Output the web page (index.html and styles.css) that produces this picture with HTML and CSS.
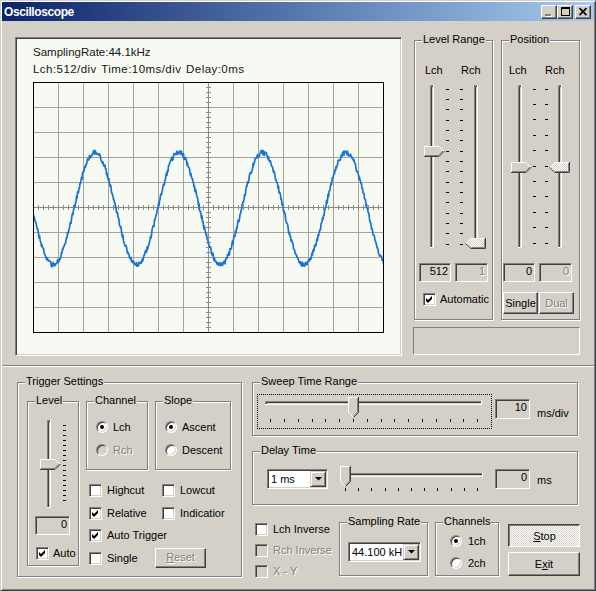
FILE: index.html
```html
<!DOCTYPE html>
<html>
<head>
<meta charset="utf-8">
<title>Oscilloscope</title>
<link rel="stylesheet" href="styles.css">
</head>
<body>
<div class="window">
  <div class="titlebar">
    <span class="title">Oscilloscope</span>
    <div class="tbtns">
      <span class="tbtn"><svg width="14" height="12" viewBox="0 0 14 12"><rect x="4" y="9" width="6" height="2" fill="#fff"/><rect x="3" y="8" width="6" height="2" fill="#808080"/></svg></span>
      <span class="tbtn"><svg width="14" height="12" viewBox="0 0 14 12"><path d="M3 1h9v9H3zM4 3v6h7V3z" fill="#000" fill-rule="evenodd"/></svg></span>
      <span class="tbtn close"><svg width="14" height="12" viewBox="0 0 14 12"><path d="M3.5 2.2l7 7M10.5 2.2l-7 7" stroke="#000" stroke-width="1.7" fill="none"/></svg></span>
    </div>
  </div>

  <div class="client">
    <div class="top">
      <div class="scope">
        <div class="scope-line">SamplingRate:44.1kHz</div>
        <div class="scope-line scope-l2">Lch:512/div Time:10ms/div Delay:0ms</div>
        <svg class="plot" width="351" height="251" viewBox="0 0 351 251">
          <path d="M25.5 0V251M50.5 0V251M75.5 0V251M100.5 0V251M125.5 0V251M150.5 0V251M200.5 0V251M225.5 0V251M250.5 0V251M275.5 0V251M300.5 0V251M325.5 0V251M0 25.5H351M0 50.5H351M0 75.5H351M0 100.5H351M0 150.5H351M0 175.5H351M0 200.5H351M0 225.5H351" stroke="#a3a3a0" fill="none"/>
          <path d="M175.5 0V251M0 125.5H351" stroke="#8a8a88" fill="none"/>
          <path d="M175.5 0V251M0 125.5H351" stroke="#8a8a88" stroke-width="5" stroke-dasharray="1 4" fill="none"/>
          <path class="wave" d="" fill="none" stroke="#1874d4" stroke-width="1.7" stroke-linejoin="round"/>
          <rect x="0.5" y="0.5" width="350" height="250" fill="none" stroke="#000"/>
        </svg>
      </div>

      <div class="rcol">
        <div class="rgroups">
          <div class="grp g-level">
            <span class="glabel">Level Range</span>
            <div class="chhead"><span class="c1 c1-lev">Lch</span><span>Rch</span></div>
            <svg class="vsl" width="77" height="166" viewBox="0 0 77 166">
              <g fill="none">
                <path d="M15.5 164V1.5H19" stroke="#808080"/>
                <path d="M16.5 163V2.5H18" stroke="#404040"/>
                <path d="M18.5 1V163.5H15" stroke="#fff"/>
                <path d="M59.5 164V1.5H63" stroke="#808080"/>
                <path d="M60.5 163V2.5H62" stroke="#404040"/>
                <path d="M62.5 1V163.5H59" stroke="#fff"/>
                <path d="M32.5 5V161M46.5 5V161" stroke="#000" stroke-width="3" stroke-dasharray="1 9 1 9 1 10"/>
              </g>
              <use href="#thR" x="9" y="62" width="21" height="11"/>
              <use href="#thL" x="50" y="154" width="21" height="11"/>
            </svg>
            <div class="edrow edrow-lev">
              <div class="edit w32">512</div>
              <div class="edit w33 dis-t">1</div>
            </div>
            <div class="ck autock">
              <span class="cb"><svg class="chk" width="9" height="9"><use href="#chk"/></svg></span>
              <span class="lbl4">Automatic</span>
            </div>
          </div>

          <div class="grp g-pos">
            <span class="glabel">Position</span>
            <div class="chhead"><span class="c1 c1-pos">Lch</span><span>Rch</span></div>
            <svg class="vsl" width="77" height="166" viewBox="0 0 77 166">
              <g fill="none">
                <path d="M16.5 164V1.5H20" stroke="#808080"/>
                <path d="M17.5 163V2.5H19" stroke="#404040"/>
                <path d="M19.5 1V163.5H16" stroke="#fff"/>
                <path d="M56.5 164V1.5H60" stroke="#808080"/>
                <path d="M57.5 163V2.5H59" stroke="#404040"/>
                <path d="M59.5 1V163.5H56" stroke="#fff"/>
                <path d="M32.5 5V161M44.5 5V161" stroke="#000" stroke-width="3" stroke-dasharray="1 14 1 14 1 15 1 14 1 15"/>
              </g>
              <use href="#thR" x="9" y="78" width="21" height="11"/>
              <use href="#thL" x="47" y="78" width="21" height="11"/>
            </svg>
            <div class="edrow edrow-pos">
              <div class="edit w32">0</div>
              <div class="edit w33 dis-t">0</div>
            </div>
            <div class="pbtns">
              <div class="btn pbtn">Single</div>
              <div class="btn pbtn dis-t">Dual</div>
            </div>
          </div>
        </div>
        <div class="status"></div>
      </div>
    </div>

    <div class="sep"></div>

    <div class="bottom">
      <div class="grp g-trig">
        <span class="glabel">Trigger Settings</span>
        <div class="trow">
          <div class="grp g-tlev">
            <span class="glabel">Level</span>
            <svg class="tlsl" width="50" height="98" viewBox="0 0 50 98">
              <g fill="none">
                <path d="M19.5 96V8.5H23" stroke="#808080"/>
                <path d="M20.5 95V9.5H22" stroke="#404040"/>
                <path d="M22.5 8V95.5H19" stroke="#fff"/>
                <path d="M36.5 13V89" stroke="#000" stroke-width="3" stroke-dasharray="1 4"/>
              </g>
              <use href="#thR" x="12" y="47" width="21" height="11"/>
            </svg>
            <div class="edit tledit">0</div>
            <div class="ck tlck">
              <span class="cb"><svg class="chk" width="9" height="9"><use href="#chk"/></svg></span>
              <span class="lbl4">Auto</span>
            </div>
          </div>

          <div class="tright">
            <div class="tgroups">
              <div class="grp g-chan">
                <span class="glabel">Channel</span>
                <div class="rrow r1"><span class="rd on"></span><span class="lbl5">Lch</span></div>
                <div class="rrow r2"><span class="rd dis"></span><span class="lbl5 dis-t">Rch</span></div>
              </div>
              <div class="grp g-slope">
                <span class="glabel">Slope</span>
                <div class="rrow r1"><span class="rd on"></span><span class="lbl5">Ascent</span></div>
                <div class="rrow r2"><span class="rd"></span><span class="lbl5">Descent</span></div>
              </div>
            </div>
            <div class="cbgrid">
              <div class="ck"><span class="cb"></span><span class="lbl5">Highcut</span></div>
              <div class="ck"><span class="cb"></span><span class="lbl5">Lowcut</span></div>
              <div class="ck"><span class="cb"><svg class="chk" width="9" height="9"><use href="#chk"/></svg></span><span class="lbl5">Relative</span></div>
              <div class="ck"><span class="cb"></span><span class="lbl5">Indicatior</span></div>
              <div class="ck span2"><span class="cb"><svg class="chk" width="9" height="9"><use href="#chk"/></svg></span><span class="lbl5">Auto Trigger</span></div>
              <div class="ck"><span class="cb"></span><span class="lbl5">Single</span></div>
              <div class="ck"><div class="btn reset dis-t"><u>R</u>eset</div></div>
            </div>
          </div>
        </div>
      </div>

      <div class="rb">
        <div class="grp g-sweep">
          <span class="glabel">Sweep Time Range</span>
          <div class="srow">
            <div class="focus">
              <svg class="hsl" width="233" height="33" viewBox="0 0 233 33">
                <g fill="none">
                  <path d="M7.5 10V6.5H224" stroke="#808080"/>
                  <path d="M8.5 9V7.5H223" stroke="#404040"/>
                  <path d="M7 9.5H223.5V6" stroke="#fff"/>
                  <path d="M12 25.5H220" stroke="#000" stroke-width="3" stroke-dasharray="1 13 1 13 1 13 1 12 1 13"/>
                </g>
                <use href="#thD" x="90" y="2" width="11" height="21"/>
              </svg>
            </div>
            <div class="edit sedit">10</div>
            <span class="unit sunit">ms/div</span>
          </div>
        </div>

        <div class="grp g-delay">
          <span class="glabel">Delay Time</span>
          <div class="drow">
            <div class="combo dcombo">
              <span class="ctext">1 ms</span>
              <span class="ddb"><svg width="7" height="4" viewBox="0 0 7 4"><polygon points="0,0 7,0 3.5,3.5" fill="#000"/></svg></span>
            </div>
            <svg class="dsl" width="150" height="31" viewBox="0 0 150 31">
              <g fill="none">
                <path d="M7.5 14V10.5H145" stroke="#808080"/>
                <path d="M8.5 13V11.5H144" stroke="#404040"/>
                <path d="M7 13.5H144.5V10" stroke="#fff"/>
                <path d="M7 26.5H140" stroke="#000" stroke-width="3" stroke-dasharray="1 12 1 12 1 13 1 12 1 12"/>
              </g>
              <use href="#thD" x="2" y="3" width="11" height="21"/>
            </svg>
            <div class="edit dedit">0</div>
            <span class="unit dunit">ms</span>
          </div>
        </div>

        <div class="brow">
          <div class="cbcol">
            <div class="ck"><span class="cb"></span><span class="lbl5">Lch Inverse</span></div>
            <div class="ck"><span class="cb dis"></span><span class="lbl5 dis-t">Rch Inverse</span></div>
            <div class="ck"><span class="cb dis"></span><span class="lbl5 dis-t">X - Y</span></div>
          </div>
          <div class="grp g-samp">
            <span class="glabel">Sampling Rate</span>
            <div class="combo scombo">
              <span class="ctext">44.100 kH</span>
              <span class="ddb"><svg width="7" height="4" viewBox="0 0 7 4"><polygon points="0,0 7,0 3.5,3.5" fill="#000"/></svg></span>
            </div>
          </div>
          <div class="grp g-chs">
            <span class="glabel">Channels</span>
            <div class="rrow c1r"><span class="rd on"></span><span class="lbl6">1ch</span></div>
            <div class="rrow c2r"><span class="rd"></span><span class="lbl6">2ch</span></div>
          </div>
          <div class="bcol">
            <div class="btn stop"><u>S</u>top</div>
            <div class="btn exit">E<u>x</u>it</div>
          </div>
        </div>
      </div>
    </div>
  </div>
</div>

<svg class="defs" width="0" height="0" aria-hidden="true">
  <defs>
    <pattern id="dith" width="2" height="2" patternUnits="userSpaceOnUse">
      <rect width="2" height="2" fill="#d4d0c8"/>
      <rect width="1" height="1" fill="#fff"/>
      <rect x="1" y="1" width="1" height="1" fill="#fff"/>
    </pattern>
    <symbol id="chk" viewBox="0 0 9 9">
      <polygon points="1,3 3,5 7,1 7,4 3,8 1,6" fill="#000"/>
    </symbol>
    <symbol id="thR" viewBox="0 0 21 11">
      <polygon points="0,0 15,0 20.5,5.5 15,11 0,11" fill="#d4d0c8"/>
      <polyline points="0.5,11 0.5,0.5 15,0.5 20,5.5" fill="none" stroke="#fff"/>
      <polyline points="0,10.5 15,10.5 20.5,5" fill="none" stroke="#404040"/>
      <polyline points="1,9.5 14.5,9.5 19,5" fill="none" stroke="#808080"/>
    </symbol>
    <symbol id="thL" viewBox="0 0 21 11">
      <polygon points="0.5,5.5 6,0 21,0 21,11 6,11" fill="url(#dith)"/>
      <polyline points="1,5.5 6,0.5 20,0.5" fill="none" stroke="#fff"/>
      <polyline points="0.5,5.5 6,10.5 20.5,10.5 20.5,0" fill="none" stroke="#404040"/>
      <polyline points="6.5,9.5 19.5,9.5 19.5,1" fill="none" stroke="#808080"/>
    </symbol>
    <symbol id="thD" viewBox="0 0 11 21">
      <polygon points="0,0 11,0 11,15 5.5,20.5 0,15" fill="#d4d0c8"/>
      <polyline points="5,20 0.5,15.5 0.5,0.5 10,0.5" fill="none" stroke="#fff"/>
      <polyline points="10.5,0 10.5,15.5 5.5,20.5" fill="none" stroke="#404040"/>
      <polyline points="9.5,1 9.5,15 5.5,19" fill="none" stroke="#808080"/>
    </symbol>
  </defs>
</svg>
<script src="script.js"></script>
</body>
</html>
```

FILE: styles.css
```css
* { box-sizing: border-box; }
html, body { margin: 0; }
body {
  background: #d4d0c8;
  font-family: "Liberation Sans", Arial, sans-serif;
  font-size: 11px;
  line-height: 13px;
  color: #000;
}
.window {
  width: 596px;
  height: 591px;
  border: 1px solid;
  border-color: #d4d0c8 #404040 #404040 #d4d0c8;
  box-shadow: inset 1px 1px #fff, inset -1px -1px #808080;
  padding: 1px;
  background: #d4d0c8;
  overflow: hidden;
}
.titlebar {
  height: 19px;
  display: flex;
  align-items: flex-start;
  background: linear-gradient(90deg, #0a246a, #a6caf0);
}
.title {
  color: #fff;
  font-weight: bold;
  font-size: 12px;
  letter-spacing: -0.4px;
  line-height: 16px;
  padding: 2px 0 0 2px;
}
.tbtns { display: flex; margin: 3px 3px 0 auto; }
.tbtn {
  width: 16px; height: 14px;
  border: 1px solid;
  border-color: #fff #404040 #404040 #fff;
  box-shadow: inset -1px -1px #808080;
  background: #d4d0c8;
}
.tbtn svg { display: block; }
.tbtn.close { margin-left: 2px; }

/* top */
.top { display: flex; align-items: flex-start; }
.top > *, .bottom > *, .brow > *, .trow > *, .tgroups > *, .rgroups > * { flex: none; }
.scope {
  width: 387px; height: 319px;
  margin: 16px 0 0 13px;
  border: 1px solid;
  border-color: #808080 #fff #fff #808080;
  box-shadow: inset 1px 1px #404040, inset -1px -1px #d4d0c8;
  background: #f7faf3;
  padding: 6px 0 0 17px;
  font-size: 11.5px;
  line-height: 17px;
  color: #151515;
}
.scope-l2 { letter-spacing: 0.45px; word-spacing: 1px; }
.plot { display: block; margin-top: 4px; }

.rcol { margin: 19px 0 0 12px; }
.rgroups { display: flex; gap: 8px; }
.grp {
  border: 1px solid #808080;
  box-shadow: inset 1px 1px #fff, 1px 1px #fff;
}
.glabel {
  display: block;
  width: max-content;
  height: 13px;
  margin: -8px 0 0 7px;
  padding: 0 1px;
  background: #d4d0c8;
  white-space: nowrap;
}
.g-level, .g-pos { width: 79px; height: 280px; }
.chhead { display: flex; height: 13px; margin-top: 18px; }
.c1 { width: 36px; }
.c1-lev { margin-left: 10px; }
.c1-pos { margin-left: 7px; }
.vsl { display: block; margin-top: 7px; }
.edrow { display: flex; gap: 4px; margin-top: 13px; }
.edrow-lev { margin-left: 4px; }
.edrow-pos { margin-left: 1px; }
.edit {
  height: 19px;
  border: 1px solid;
  border-color: #808080 #fff #fff #808080;
  box-shadow: inset 1px 1px #404040, inset -1px -1px #d4d0c8;
  text-align: right;
  padding: 1px 2px 0 0;
}
.w32 { width: 32px; }
.w33 { width: 33px; }
.autock { margin: 11px 0 0 8px; }
.pbtns { display: flex; gap: 1px; margin: 10px 0 0 1px; }
.pbtn { width: 35px; height: 22px; }
.status {
  width: 167px; height: 28px;
  margin: 7px 0 0 -1px;
  border: 1px solid;
  border-color: #808080 #fff #fff #808080;
}

.sep {
  margin-top: 9px;
  height: 2px;
  border-top: 1px solid #808080;
  border-bottom: 1px solid #fff;
}

/* controls */
.ck { display: flex; align-items: center; height: 13px; white-space: nowrap; }
.cb {
  width: 13px; height: 13px; flex: none;
  border: 1px solid;
  border-color: #808080 #fff #fff #808080;
  box-shadow: inset 1px 1px #404040, inset -1px -1px #d4d0c8;
  background: #fff;
}
.cb.dis { background: #d4d0c8; }
.chk { display: block; margin: 1px; }
.lbl4 { margin-left: 4px; }
.lbl5 { margin-left: 5px; }
.lbl6 { margin-left: 6px; }
.dis-t { color: #808080; text-shadow: 1px 1px #fff; }

.rrow { display: flex; align-items: center; height: 12px; margin-left: 9px; white-space: nowrap; }
.rrow.r1 { margin-top: 14px; }
.rrow.r2 { margin-top: 11px; }
.rd {
  width: 12px; height: 12px; flex: none;
  border-radius: 50%;
  border: 1px solid;
  border-color: #808080 #fff #fff #808080;
  box-shadow: inset 1px 1px #404040, inset -1px -1px #d4d0c8;
  background: #fff;
  display: flex; align-items: center; justify-content: center;
}
.rd.dis { background: #d4d0c8; }
.rd.on::after {
  content: "";
  width: 4px; height: 4px;
  border-radius: 50%;
  background: #000;
}

.btn {
  border: 1px solid;
  border-color: #fff #404040 #404040 #fff;
  box-shadow: inset -1px -1px #808080;
  background: #d4d0c8;
  display: flex; align-items: center; justify-content: center;
  white-space: nowrap;
}

/* bottom */
.bottom { display: flex; align-items: flex-start; }
.g-trig { width: 225px; height: 195px; margin: 15px 0 0 15px; }
.trow { display: flex; align-items: flex-start; margin-top: 13px; }
.g-tlev { width: 52px; height: 165px; margin-left: 9px; }
.tlsl { display: block; margin-top: 5px; }
.tledit { width: 35px; margin: 6px 0 0 7px; }
.tlck { margin: 12px 0 0 8px; }
.tright { margin-left: 7px; }
.tgroups { display: flex; gap: 7px; }
.g-chan { width: 62px; height: 69px; }
.g-slope { width: 76px; height: 69px; }
.cbgrid {
  display: grid;
  grid-template-columns: 73px auto;
  grid-auto-rows: 13px;
  row-gap: 9.5px;
  margin: 14px 0 0 3px;
}
.span2 { grid-column: span 2; }
.reset { width: 51px; height: 20px; margin: -4px 0 -3px -7px; }

.rb { width: 330px; margin: 15px 0 0 10px; }
.g-sweep { width: 326px; height: 54px; }
.srow { display: flex; align-items: flex-start; margin-top: 6px; }
.srow > *, .drow > * { flex: none; }
.focus { width: 235px; height: 35px; margin-left: 4px; border: 1px dotted #000; }
.hsl { display: block; }
.sedit { width: 35px; height: 20px; margin: 5px 0 0 3px; }
.unit { white-space: nowrap; }
.sunit { margin: 13px 0 0 7px; }
.g-delay { width: 326px; height: 54px; margin-top: 15px; }
.drow { display: flex; align-items: flex-start; margin-top: 6px; }
.combo {
  height: 20px;
  display: flex;
  padding: 1px;
  border: 1px solid;
  border-color: #808080 #fff #fff #808080;
  box-shadow: inset 1px 1px #404040, inset -1px -1px #d4d0c8;
  background: #fff;
}
.ctext { flex: 1; min-width: 0; white-space: nowrap; padding: 2px 0 0 2px; }
.ddb {
  width: 16px; height: 16px; flex: none;
  border: 1px solid;
  border-color: #d4d0c8 #404040 #404040 #d4d0c8;
  box-shadow: inset 1px 1px #fff, inset -1px -1px #808080;
  background: #d4d0c8;
  display: flex; align-items: center; justify-content: center;
}
.ddb svg { display: block; }
.dcombo { width: 61px; margin: 6px 0 0 14px; }
.dsl { display: block; margin-left: 10px; }
.dedit { width: 35px; height: 20px; margin: 6px 0 0 7px; }
.dunit { margin: 11px 0 0 7px; }

.brow { display: flex; align-items: flex-start; margin-top: 17px; }
.cbcol { width: 84px; margin: 1px 0 0 3px; display: flex; flex-direction: column; gap: 8px; }
.g-samp { width: 89px; height: 54px; }
.scombo { width: 73px; margin: 14px 0 0 8px; }
.g-chs { width: 64px; height: 54px; margin-left: 7px; }
.g-chs .rrow { margin-left: 14px; }
.c1r { margin-top: 7px; }
.c2r { margin-top: 10px; }
.bcol { margin: 2px 0 0 9px; display: flex; flex-direction: column; gap: 5px; }
.stop {
  width: 72px; height: 23px;
  border-color: #404040 #fff #fff #404040;
  box-shadow: inset 1px 1px #808080;
  background-color: #d4d0c8;
  background-image: repeating-conic-gradient(#fff 0% 25%, transparent 0% 50%);
  background-size: 2px 2px;
  padding: 1px 0 0 1px;
}
.exit { width: 72px; height: 24px; }

.defs { display: block; width: 0; height: 0; overflow: hidden; }
```

FILE: script.js
```js
(function () {
  var path = document.querySelector('.wave');
  if (!path) return;
  var seed = 20240611;
  function rnd() {
    seed = (Math.imul(seed, 1664525) + 1013904223) >>> 0;
    return seed / 4294967296;
  }
  var d = [];
  for (var i = 0; i <= 704; i++) {
    var x = i * 0.5;
    var y = 126.5 - 56 * Math.cos(2 * Math.PI * (x - 62) / 83.7) + (rnd() - 0.5) * 5;
    d.push((i ? 'L' : 'M') + x.toFixed(1) + ' ' + y.toFixed(2));
  }
  path.setAttribute('d', d.join(''));
})();
```
